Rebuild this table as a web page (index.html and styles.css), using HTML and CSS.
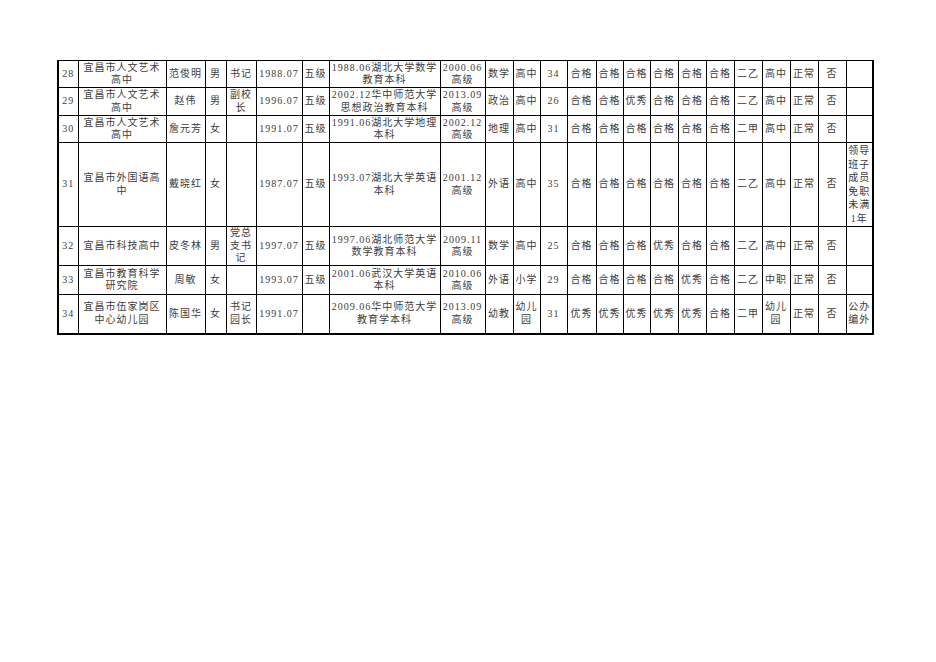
FILE: index.html
```html
<!DOCTYPE html>
<html lang="zh-CN">
<head>
<meta charset="utf-8">
<title>表格</title>
<link rel="stylesheet" href="styles.css">
</head>
<body>
<table class="sheet">
<colgroup>
<col><col><col><col><col><col><col><col><col><col><col><col><col><col><col><col><col><col><col><col><col><col><col>
</colgroup>
<tbody>
<tr class="r28">
<td>28</td><td>宜昌市人文艺术<br>高中</td><td>范俊明</td><td>男</td><td>书记</td><td>1988.07</td><td>五级</td><td>1988.06湖北大学数学<br>教育本科</td><td>2000.06<br>高级</td><td>数学</td><td>高中</td><td>34</td><td>合格</td><td>合格</td><td>合格</td><td>合格</td><td>合格</td><td>合格</td><td>二乙</td><td>高中</td><td>正常</td><td>否</td><td></td>
</tr>
<tr class="r29">
<td>29</td><td>宜昌市人文艺术<br>高中</td><td>赵伟</td><td>男</td><td>副校<br>长</td><td>1996.07</td><td>五级</td><td>2002.12华中师范大学<br>思想政治教育本科</td><td>2013.09<br>高级</td><td>政治</td><td>高中</td><td>26</td><td>合格</td><td>合格</td><td>优秀</td><td>合格</td><td>合格</td><td>合格</td><td>二乙</td><td>高中</td><td>正常</td><td>否</td><td></td>
</tr>
<tr class="r30">
<td>30</td><td>宜昌市人文艺术<br>高中</td><td>詹元芳</td><td>女</td><td></td><td>1991.07</td><td>五级</td><td>1991.06湖北大学地理<br>本科</td><td>2002.12<br>高级</td><td>地理</td><td>高中</td><td>31</td><td>合格</td><td>合格</td><td>合格</td><td>合格</td><td>合格</td><td>合格</td><td>二甲</td><td>高中</td><td>正常</td><td>否</td><td></td>
</tr>
<tr class="r31">
<td>31</td><td>宜昌市外国语高<br>中</td><td>戴晓红</td><td>女</td><td></td><td>1987.07</td><td>五级</td><td>1993.07湖北大学英语<br>本科</td><td>2001.12<br>高级</td><td>外语</td><td>高中</td><td>35</td><td>合格</td><td>合格</td><td>合格</td><td>合格</td><td>合格</td><td>合格</td><td>二乙</td><td>高中</td><td>正常</td><td>否</td><td class="note">领导<br>班子<br>成员<br>免职<br>未满<br>1年</td>
</tr>
<tr class="r32">
<td>32</td><td>宜昌市科技高中</td><td>皮冬林</td><td>男</td><td>党总<br>支书<br>记</td><td>1997.07</td><td>五级</td><td>1997.06湖北师范大学<br>数学教育本科</td><td>2009.11<br>高级</td><td>数学</td><td>高中</td><td>25</td><td>合格</td><td>合格</td><td>合格</td><td>优秀</td><td>合格</td><td>合格</td><td>二乙</td><td>高中</td><td>正常</td><td>否</td><td></td>
</tr>
<tr class="r33">
<td>33</td><td>宜昌市教育科学<br>研究院</td><td>周敏</td><td>女</td><td></td><td>1993.07</td><td>五级</td><td>2001.06武汉大学英语<br>本科</td><td>2010.06<br>高级</td><td>外语</td><td>小学</td><td>29</td><td>合格</td><td>合格</td><td>合格</td><td>合格</td><td>优秀</td><td>合格</td><td>二乙</td><td>中职</td><td>正常</td><td>否</td><td></td>
</tr>
<tr class="r34">
<td>34</td><td>宜昌市伍家岗区<br>中心幼儿园</td><td>陈国华</td><td>女</td><td>书记<br>园长</td><td>1991.07</td><td></td><td>2009.06华中师范大学<br>教育学本科</td><td>2013.09<br>高级</td><td>幼教</td><td>幼儿<br>园</td><td>31</td><td>优秀</td><td>优秀</td><td>优秀</td><td>优秀</td><td>优秀</td><td>合格</td><td>二甲</td><td>幼儿<br>园</td><td>正常</td><td>否</td><td>公办<br>编外</td>
</tr>
</tbody>
</table>
</body>
</html>
```

FILE: styles.css
```css
html, body {
  margin: 0;
  padding: 0;
  background: #ffffff;
}

body {
  padding: 60px 0 0 57px;
  font-family: "Liberation Serif", "Noto Sans CJK SC", serif;
  color: #3c3c3c;
}

.sheet {
  border-collapse: collapse;
  table-layout: fixed;
  width: 814px;
  border-left: 2px solid #000;
  border-right: 2px solid #000;
  border-bottom: 2px solid #000;
  border-top: 1px solid #000;
}

.sheet td {
  border: 1px solid #000;
  padding: 0;
  text-align: center;
  vertical-align: middle;
  font-size: 10px;
  line-height: 12.5px;
  letter-spacing: 1px;
  white-space: nowrap;
  overflow: hidden;
}

.sheet td.note {
  line-height: 13.5px;
}

.sheet col:nth-child(1) { width: 20px; }
.sheet col:nth-child(2) { width: 88px; }
.sheet col:nth-child(3) { width: 39px; }
.sheet col:nth-child(4) { width: 21px; }
.sheet col:nth-child(5) { width: 30px; }
.sheet col:nth-child(6) { width: 46px; }
.sheet col:nth-child(7) { width: 27px; }
.sheet col:nth-child(8) { width: 111px; }
.sheet col:nth-child(9) { width: 45px; }
.sheet col:nth-child(10) { width: 28px; }
.sheet col:nth-child(11) { width: 27px; }
.sheet col:nth-child(12) { width: 27px; }
.sheet col:nth-child(13) { width: 29px; }
.sheet col:nth-child(14) { width: 27px; }
.sheet col:nth-child(15) { width: 27px; }
.sheet col:nth-child(16) { width: 28px; }
.sheet col:nth-child(17) { width: 28px; }
.sheet col:nth-child(18) { width: 28px; }
.sheet col:nth-child(19) { width: 28px; }
.sheet col:nth-child(20) { width: 28px; }
.sheet col:nth-child(21) { width: 28px; }
.sheet col:nth-child(22) { width: 28px; }
.sheet col:nth-child(23) { width: 27px; }

.r28 { height: 27px; }
.r29 { height: 28px; }
.r30 { height: 27px; }
.r31 { height: 84px; }
.r32 { height: 39px; }
.r33 { height: 29px; }
.r34 { height: 39px; }
```
